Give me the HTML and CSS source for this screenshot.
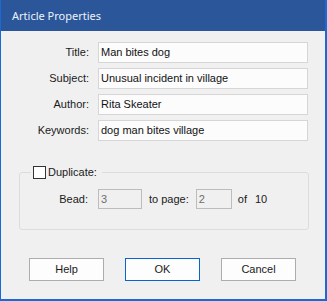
FILE: index.html
```html
<!DOCTYPE html>
<html>
<head>
<meta charset="utf-8">
<link rel="stylesheet" href="styles.css">
</head>
<body>
<div class="window">
  <div class="titlebar">Article Properties</div>
  <div class="content">
    <div class="fields">
      <label class="label">Title:</label>
      <div class="input">Man bites dog</div>
      <label class="label">Subject:</label>
      <div class="input">Unusual incident in village</div>
      <label class="label">Author:</label>
      <div class="input">Rita Skeater</div>
      <label class="label">Keywords:</label>
      <div class="input">dog man bites village</div>
    </div>
    <fieldset class="group">
      <legend class="legend"><span class="checkbox"></span><span class="legend-text">Duplicate:</span></legend>
      <div class="bead-row">
        <span class="bead-label">Bead:</span>
        <div class="small-input bead-input">3</div>
        <span class="to-page">to page:</span>
        <div class="small-input page-input">2</div>
        <span class="of">of</span>
        <span class="total">10</span>
      </div>
    </fieldset>
    <div class="buttons">
      <div class="button">Help</div>
      <div class="button default">OK</div>
      <div class="button">Cancel</div>
    </div>
  </div>
</div>
</body>
</html>
```

FILE: styles.css
```css
html, body {
  margin: 0;
  padding: 0;
  background: #f0f0f0;
}

.window {
  width: 327px;
  height: 301px;
  box-sizing: border-box;
  border-left: 1px solid #1a6ad6;
  border-right: 2px solid #1a6ad6;
  border-bottom: 2px solid #1a6ad6;
  background: #f0f0f0;
  font-family: "Liberation Sans", Arial, sans-serif;
  font-size: 11px;
  color: #1a1a1a;
  overflow: hidden;
}

.titlebar {
  height: 31px;
  margin-left: -1px;
  margin-right: -2px;
  background: #2b579a;
  color: #eef2f8;
  font-family: "Noto Sans", "Open Sans", sans-serif;
  font-size: 11px;
  line-height: 32px;
  padding-left: 12px;
  box-sizing: border-box;
}

.content {
  padding-top: 11px;
}

.fields {
  display: grid;
  grid-template-columns: 88px 210px;
  grid-auto-rows: 21px;
  column-gap: 9px;
  row-gap: 5px;
}

.label {
  text-align: right;
  line-height: 21px;
  white-space: nowrap;
}

.input {
  box-sizing: border-box;
  height: 21px;
  border: 1px solid #d6d6d6;
  background: #fcfcfc;
  padding-left: 2px;
  line-height: 19px;
  color: #111;
  white-space: nowrap;
}

.group {
  margin: 25px 0 0 18px;
  width: 290px;
  box-sizing: border-box;
  border: 1px solid #dcdcdc;
  border-radius: 3px;
  padding: 10px 0 20px 0;
  min-width: 0;
}

.legend {
  margin-left: 11px;
  padding: 0 5px 0 2px;
  height: 13px;
  display: flex;
  align-items: center;
  line-height: 13px;
}

.checkbox {
  width: 13px;
  height: 13px;
  box-sizing: border-box;
  border: 1px solid #333;
  background: #fff;
  margin-right: 2px;
}

.legend-text {
  color: #1a1a1a;
}

.bead-row {
  display: flex;
  align-items: center;
  height: 20px;
}

.bead-label {
  width: 68px;
  text-align: right;
  margin-right: 10px;
}

.small-input {
  box-sizing: border-box;
  height: 20px;
  border: 1px solid #bcbcbc;
  background: #f0f0f0;
  color: #6d6d6d;
  padding-left: 2px;
  line-height: 18px;
}

.bead-input {
  width: 44px;
}

.to-page {
  margin-left: 7px;
  margin-right: 7px;
}

.page-input {
  width: 36px;
}

.of {
  margin-left: 6px;
  margin-right: 8px;
}

.buttons {
  display: flex;
  gap: 21px;
  margin: 28px 0 0 28px;
}

.button {
  width: 75px;
  height: 23px;
  box-sizing: border-box;
  border: 1px solid #adadad;
  background: #fdfdfd;
  text-align: center;
  line-height: 21px;
  color: #1a1a1a;
}

.button.default {
  border-color: #0a64d0;
}
```
